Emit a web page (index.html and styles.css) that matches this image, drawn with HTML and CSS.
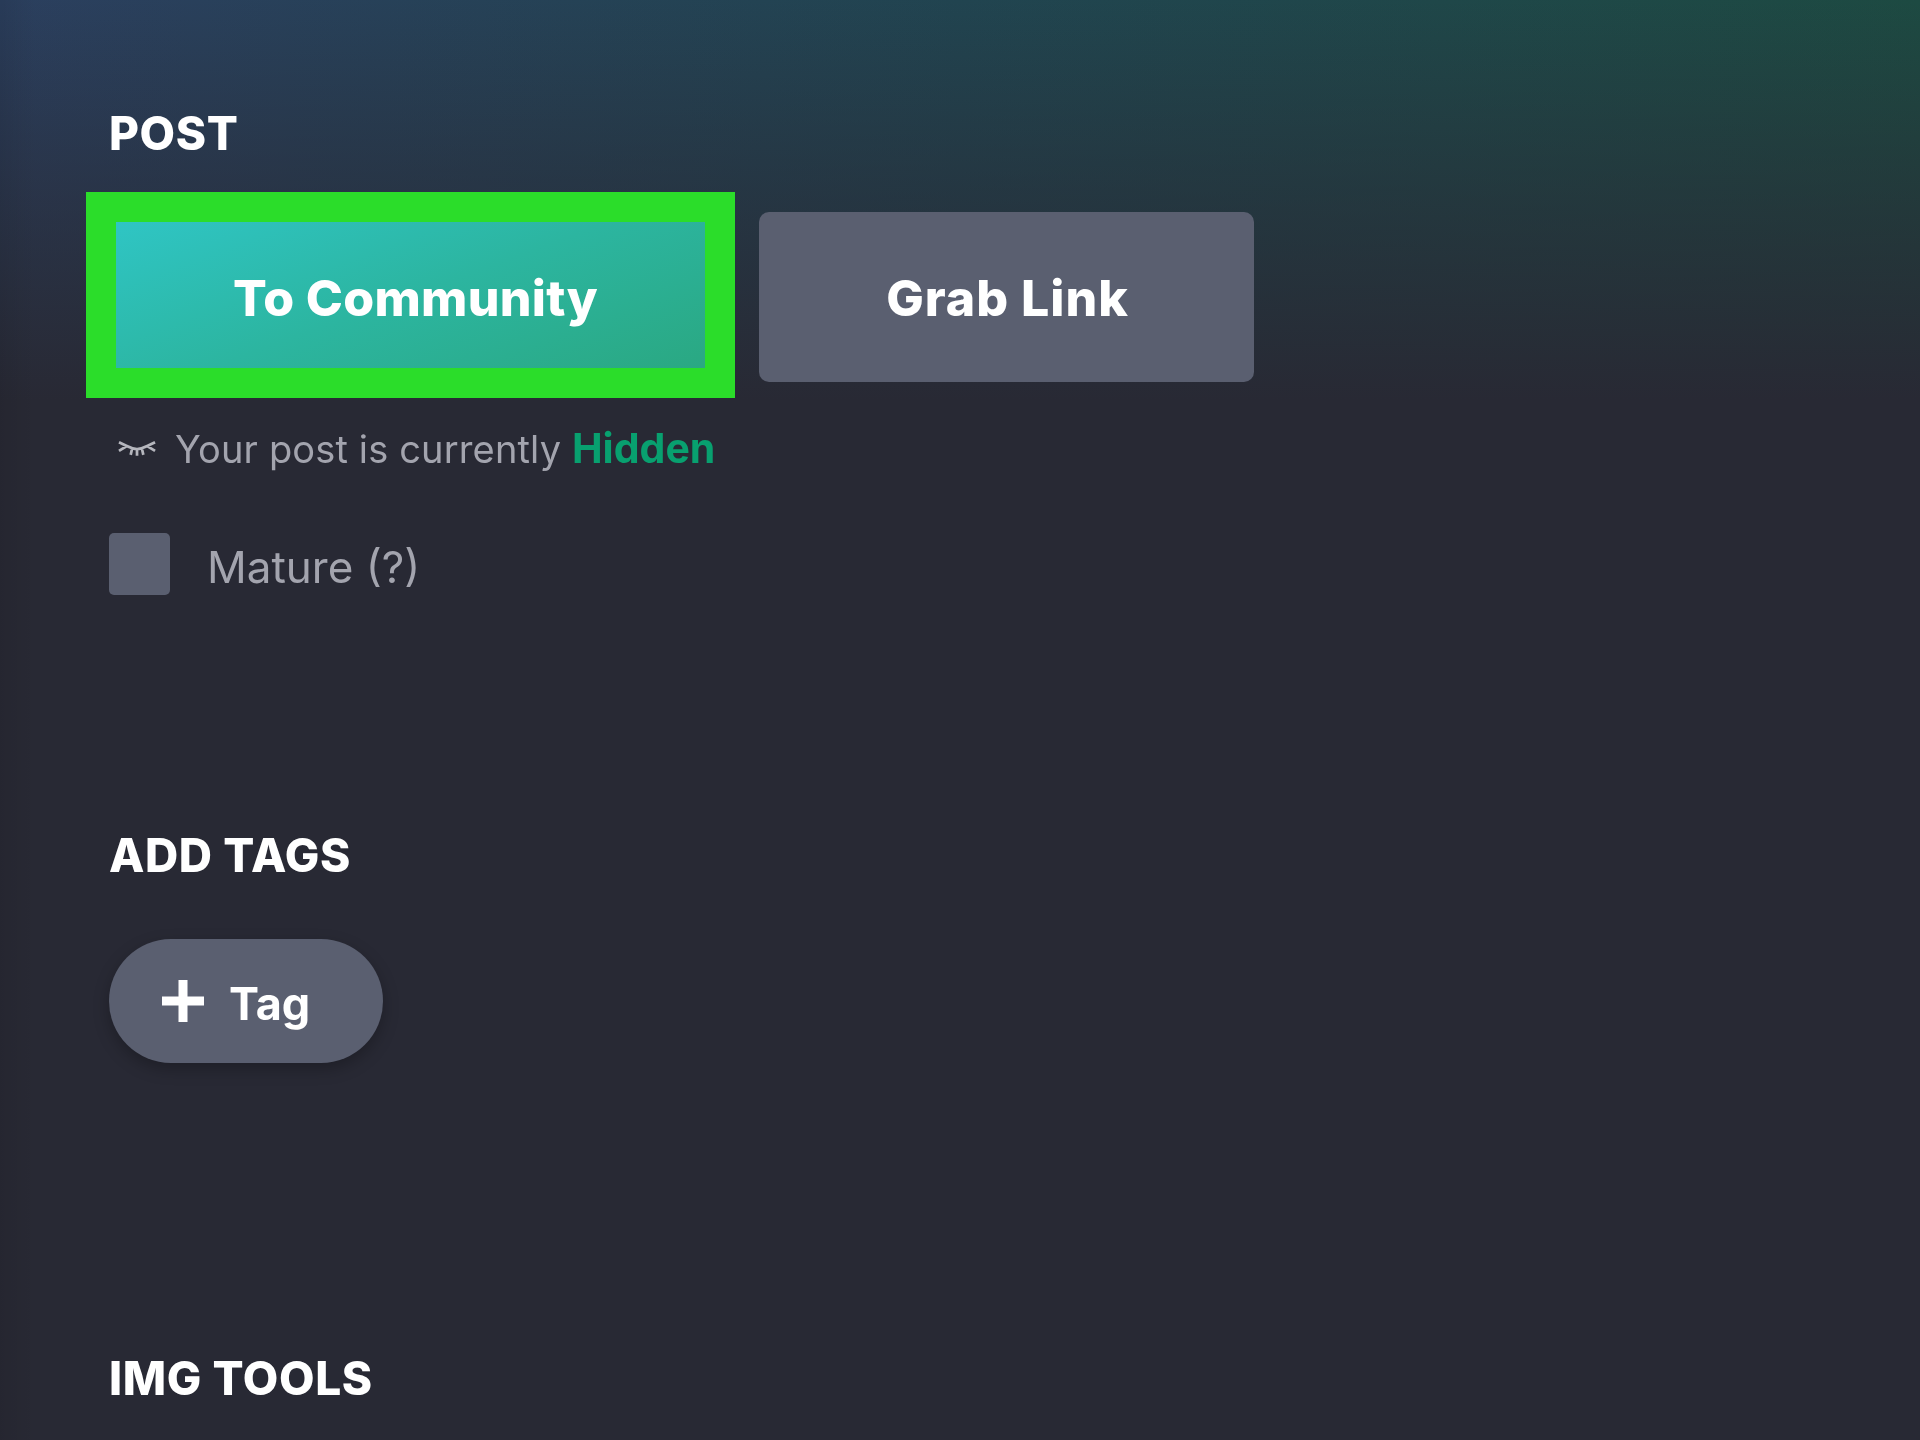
FILE: index.html
```html
<!DOCTYPE html>
<html lang="en">
<head>
<meta charset="utf-8">
<title>Post</title>
<link rel="stylesheet" href="styles.css">
</head>
<body>
<main class="panel">
  <section class="section section-post">
    <h2 class="heading">POST</h2>
    <div class="actions">
      <button class="btn btn-primary"><span class="soft">To Community</span></button>
      <button class="btn btn-secondary">Grab Link</button>
    </div>
    <p class="status">
      <svg class="eye" viewBox="0 0 40 20" aria-hidden="true"><path d="M1 3 L9 7 M1 12 L9 7 C13 9 16 10 19.5 10 C23 10 26 9 30 7 M38 3 L30 7 M38 12 L30 7 M13 16 L14.5 9.5 M19.5 17 V10 M26 16 L24.5 9.5"/></svg>
      <span>Your post is currently <b class="hidden-word">Hidden</b></span>
    </p>
    <label class="mature"><span class="check"></span><span class="mature-text">Mature (?)</span></label>
  </section>
  <section class="section section-tags">
    <h2 class="heading">ADD TAGS</h2>
    <button class="tag-btn">
      <svg class="plus" viewBox="0 0 42 42" aria-hidden="true"><path d="M21 0 V42 M0 21 H42"/></svg>
      <span class="tag-text">Tag</span>
    </button>
  </section>
  <section class="section section-img">
    <h2 class="heading">IMG TOOLS</h2>
  </section>
</main>
</body>
</html>
```
FILE: styles.css
```css
* { box-sizing: border-box; }
html, body { margin: 0; height: 100%; }
body {
  width: 1920px;
  height: 1440px;
  overflow: hidden;
  font-family: Inter, "Liberation Sans", sans-serif;
  color: #fff;
  background:
    linear-gradient(to right, rgba(0,0,0,.07) 0, rgba(0,0,0,0) 36px),
    linear-gradient(to bottom, rgba(40,41,52,0) 0, rgba(40,41,52,.55) 210px, rgba(40,41,52,1) 400px),
    linear-gradient(to right, #2b3f5e 0, #214450 50%, #1d4a42 100%),
    #282934;
}
.panel { padding: 108px 0 0 109px; display: flex; flex-direction: column; }
.heading, .status, .mature, .tag-btn, .btn-secondary, .soft { filter: blur(.6px); }
.heading { margin: 0; font-size: 46px; line-height: 50px; font-weight: 800; letter-spacing: .6px; }
.actions { display: flex; gap: 54px; margin-top: 54px; }
.btn {
  border: 0; height: 170px; border-radius: 10px;
  color: #fff; font: 800 50px/1 Inter, sans-serif;
}
.btn-primary {
  width: 589px; height: 146px; margin: 10px 0 14px 7px; padding: 5px 0 0 10px;
  border-radius: 0;
  background: linear-gradient(160deg, #2fc5c4 0, #2cb5a0 50%, #2aa882 100%);
  outline: 30px solid #2bdd2a;
  letter-spacing: .3px;
}
.soft { display: inline-block; }
.btn-secondary { width: 495px; background: #5a5f70; letter-spacing: 1px; padding: 2px 0 0 2px; }
.status { display: flex; align-items: center; gap: 18px; margin: 42px 0 0 9px; font-size: 38px; line-height: 48px; color: #a3a4ae; letter-spacing: .15px; }
.eye { width: 39px; height: 20px; fill: none; stroke: #b5b6bd; stroke-width: 2.8; }
.hidden-word { color: #08a06f; font-weight: 700; font-size: 41px; letter-spacing: 0; }
.mature { display: flex; align-items: center; gap: 37px; margin-top: 60px; font-size: 44px; color: #a3a4ae; }
.mature-text { padding-top: 6px; }
.check { width: 61px; height: 62px; border-radius: 5px; background: #5a5f70; }
.section-tags { margin-top: 235px; }
.tag-btn {
  display: flex; align-items: center; gap: 25px;
  width: 274px; height: 124px; margin-top: 59px; padding: 0 0 0 53px;
  border: 0; border-radius: 62px; background: #5a5f70;
  box-shadow: 0 6px 16px rgba(0,0,0,.25);
  color: #fff; font: 700 45px/1 Inter, sans-serif;
}
.tag-text { padding-top: 5px; }
.plus { width: 42px; height: 42px; fill: none; stroke: #fff; stroke-width: 9; }
.section-img { margin-top: 290px; }
```
